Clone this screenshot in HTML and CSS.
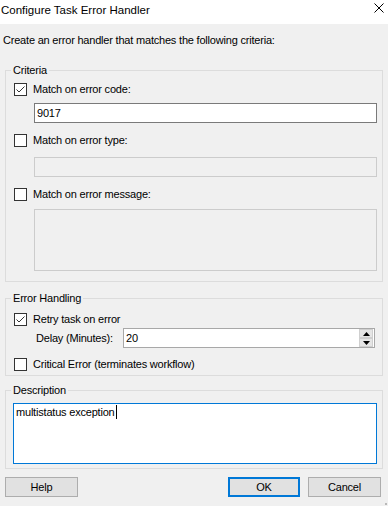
FILE: index.html
```html
<!DOCTYPE html>
<html>
<head>
<meta charset="utf-8">
<link rel="stylesheet" href="styles.css">
</head>
<body>
<div class="window">
  <div class="titlebar">
    <span class="title">Configure Task Error Handler</span>
    <svg class="close" width="10" height="10" viewBox="0 0 10 10"><path d="M0.5 0.5 L9.5 9.5 M9.5 0.5 L0.5 9.5" stroke="#000" stroke-width="1" fill="none"/></svg>
  </div>
  <div class="content">
    <p class="intro">Create an error handler that matches the following criteria:</p>

    <fieldset class="group criteria">
      <legend>Criteria</legend>
      <div class="check row-code"><span class="box"><svg width="11" height="11" viewBox="0 0 11 11"><path d="M1.5 5.5 L4 8 L9.5 2.5" stroke="#333" stroke-width="1" fill="none"/></svg></span><span class="lbl">Match on error code:</span></div>
      <div class="textbox tb-code">9017</div>
      <div class="check row-type"><span class="box"></span><span class="lbl">Match on error type:</span></div>
      <div class="textbox disabled tb-type"></div>
      <div class="check row-msg"><span class="box"></span><span class="lbl">Match on error message:</span></div>
      <div class="textbox disabled tb-msg"></div>
    </fieldset>

    <fieldset class="group handling">
      <legend>Error Handling</legend>
      <div class="check row-retry"><span class="box"><svg width="11" height="11" viewBox="0 0 11 11"><path d="M1.5 5.5 L4 8 L9.5 2.5" stroke="#333" stroke-width="1" fill="none"/></svg></span><span class="lbl">Retry task on error</span></div>
      <div class="delay">
        <span class="delay-lbl">Delay (Minutes):</span>
        <div class="numeric">
          <span class="num-val">20</span>
          <div class="spin">
            <div class="spin-btn"><svg width="7" height="4" viewBox="0 0 7 4"><path d="M3.5 0 L7 4 L0 4 Z" fill="#000"/></svg></div>
            <div class="spin-btn"><svg width="7" height="4" viewBox="0 0 7 4"><path d="M0 0 L7 0 L3.5 4 Z" fill="#000"/></svg></div>
          </div>
        </div>
      </div>
      <div class="check row-critical"><span class="box"></span><span class="lbl">Critical Error (terminates workflow)</span></div>
    </fieldset>

    <fieldset class="group description">
      <legend>Description</legend>
      <div class="textarea"><span>multistatus exception</span><span class="caret"></span></div>
    </fieldset>

    <div class="buttons">
      <div class="btn">Help</div>
      <div class="spacer"></div>
      <div class="btn default">OK</div>
      <div class="btn">Cancel</div>
    </div>
  </div>
  <div class="grip"></div>
</div>
</body>
</html>
```

FILE: styles.css
```css
html, body {
  margin: 0;
  padding: 0;
}
body {
  width: 388px;
  height: 506px;
  overflow: hidden;
  background: #f0f0f0;
  font-family: "Liberation Sans", Arial, sans-serif;
  font-size: 11px;
  letter-spacing: -0.2px;
  color: #000;
}
.window {
  position: relative;
  width: 388px;
  height: 506px;
  background: #f0f0f0;
}
.titlebar {
  height: 24px;
  background: #fff;
  display: flex;
  justify-content: space-between;
  align-items: flex-start;
}
.title {
  font-size: 11.5px;
  letter-spacing: 0;
  line-height: 14px;
  margin: 3px 0 0 1px;
}
.close {
  display: block;
  margin: 3px 4px 0 0;
}
.content {
  display: flex;
  flex-direction: column;
}
.intro {
  margin: 10px 0 0 3px;
  line-height: 13px;
}
.group {
  margin: 0 5px;
  padding: 0;
  border: 1px solid #dcdcdc;
  width: 378px;
  box-sizing: border-box;
  min-width: 0;
  display: flex;
  flex-direction: column;
}
.group legend {
  margin-left: 5px;
  padding: 0 2px;
  line-height: 13px;
  height: 13px;
}
.criteria { margin-top: 17px; padding-bottom: 10px; }
.handling { margin-top: 10px; padding-bottom: 4px; }
.description { margin-top: 8px; padding-bottom: 4px; }

.check {
  display: flex;
  align-items: center;
  height: 13px;
  margin-left: 8px;
  line-height: 13px;
}
.box {
  width: 13px;
  height: 13px;
  box-sizing: border-box;
  border: 1px solid #333;
  background: #fff;
  display: flex;
  align-items: center;
  justify-content: center;
  flex: none;
}
.box svg { display: block; }
.lbl { margin-left: 6px; }

.row-code { margin-top: 6px; }
.row-type { margin-top: 11px; }
.row-msg { margin-top: 11px; }
.row-retry { margin-top: 8px; }
.row-critical { margin-top: 10px; }

.textbox {
  margin-left: 28px;
  width: 343px;
  height: 20px;
  box-sizing: border-box;
  border: 1px solid #7a7a7a;
  background: #fff;
  padding: 2px 2px;
  line-height: 14px;
}
.tb-code { margin-top: 7px; }
.textbox.disabled {
  background: #f0f0f0;
  border-color: #cccccc;
}
.tb-type { margin-top: 10px; }
.tb-msg { margin-top: 8px; height: 62px; }

.delay {
  display: flex;
  align-items: center;
  margin-top: 2px;
  margin-left: 30px;
  margin-right: 7px;
}
.delay-lbl {
  width: 87px;
  flex: none;
}
.numeric {
  flex: 1;
  height: 20px;
  box-sizing: border-box;
  border: 1px solid #a8a8a8;
  background: #fff;
  display: flex;
  align-items: stretch;
}
.num-val {
  flex: 1;
  padding-left: 2px;
  line-height: 18px;
}
.spin {
  width: 14px;
  margin-right: 1px;
  display: flex;
  flex-direction: column;
  justify-content: space-between;
}
.spin-btn {
  height: 9px;
  box-sizing: border-box;
  background: #e5e5e5;
  border: 1px solid #cfcfcf;
  display: flex;
  align-items: center;
  justify-content: center;
}
.spin-btn svg { display: block; }

.textarea {
  margin: 6px 0 0 7px;
  width: 364px;
  height: 61px;
  box-sizing: border-box;
  border: 1px solid #0078d7;
  background: #fff;
  padding: 1px 2px;
  line-height: 14px;
  display: flex;
  align-items: flex-start;
}
.caret {
  display: inline-block;
  width: 1px;
  height: 14px;
  background: #000;
  margin-left: 1px;
}

.buttons {
  display: flex;
  margin: 8px 7px 0 5px;
  gap: 8px;
}
.spacer { flex: 1; }
.btn {
  width: 73px;
  height: 20px;
  box-sizing: border-box;
  border: 1px solid #adadad;
  background: #e1e1e1;
  display: flex;
  align-items: center;
  justify-content: center;
  line-height: 13px;
}
.btn.default {
  border: 2px solid #0078d7;
  width: 72px;
}
.grip {
  position: absolute;
  right: 1px;
  bottom: 1px;
  width: 2px;
  height: 2px;
  background: #b8b8b8;
}
```
